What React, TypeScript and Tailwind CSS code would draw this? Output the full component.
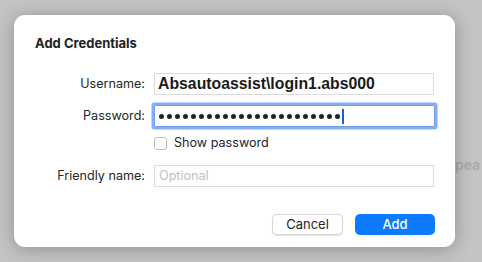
import React from "react";

export default function App() {
  const dots = Array.from({ length: 23 });
  return (
    <div
      className="relative w-[482px] h-[262px] overflow-hidden bg-[#c4c4c4] pt-[15px] pl-[14px]"
      style={{ fontFamily: "Inter, 'Liberation Sans', sans-serif" }}
    >
      <div className="absolute left-[436px] top-[154px] text-[14px] font-semibold text-[#a9a9a9]">
        Appea
      </div>
      <div className="relative w-[441px] h-[232px] bg-white rounded-[11px] shadow-[0_2px_18px_rgba(0,0,0,0.28)] flex flex-col pl-[21px] pr-[20px] pt-[20px]">
        <div className="text-[13px] leading-[16px] font-bold text-[#222]">Add Credentials</div>

        <div className="flex items-center mt-[22px]">
          <div className="w-[110px] text-right text-[12.6px] leading-[16px] text-[#262626]">Username:</div>
          <div className="ml-[9px] w-[280px] h-[22px] border border-[#dcdcdc] flex items-center pl-[3px]">
            <span
              className="text-[15.8px] font-bold text-[#1a1a1a]"
              style={{ fontFamily: "'Liberation Sans', Arial, sans-serif" }}
            >
              Absautoassist\login1.abs000
            </span>
          </div>
        </div>

        <div className="flex items-center mt-[10px]">
          <div className="w-[110px] text-right text-[12.6px] leading-[16px] text-[#262626]">Password:</div>
          <div className="ml-[9px] w-[281px] h-[22px] rounded-[1px] border border-[#6f9ff0] shadow-[0_0_0_2.5px_#86aef5] flex items-center pl-[4px]">
            <div className="flex items-center gap-[3px]">
              {dots.map((_, i) => (
                <div key={i} className="w-[5px] h-[5px] rounded-full bg-[#222]" />
              ))}
            </div>
            <div className="ml-[2px] w-[2px] h-[15px] bg-[#0a64e8]" />
          </div>
        </div>

        <div className="flex items-center h-[16px] mt-[8px] ml-[119px]">
          <div className="w-[13px] h-[13px] rounded-[3px] border border-[#bdbdbd] bg-white" />
          <span className="ml-[7px] text-[12.6px] leading-[16px] text-[#262626]">Show password</span>
        </div>

        <div className="flex items-center mt-[14px]">
          <div className="w-[110px] text-right text-[12.6px] leading-[16px] text-[#262626]">Friendly name:</div>
          <div className="ml-[9px] w-[280px] h-[22px] border border-[#dcdcdc] flex items-center pl-[4px]">
            <span className="text-[12.6px] text-[#c0c0c0]">Optional</span>
          </div>
        </div>

        <div className="flex justify-end gap-[12px] mt-[27px]">
          <div className="w-[71px] h-[21px] rounded-[5px] bg-white border border-[#d6d6d6] shadow-[0_0.5px_1px_rgba(0,0,0,0.12)] flex items-center justify-center text-[13px] text-[#262626]">
            Cancel
          </div>
          <div className="w-[80px] h-[21px] rounded-[5px] bg-[#0d7bfe] flex items-center justify-center text-[13px] font-medium text-white">
            Add
          </div>
        </div>
      </div>
    </div>
  );
}
